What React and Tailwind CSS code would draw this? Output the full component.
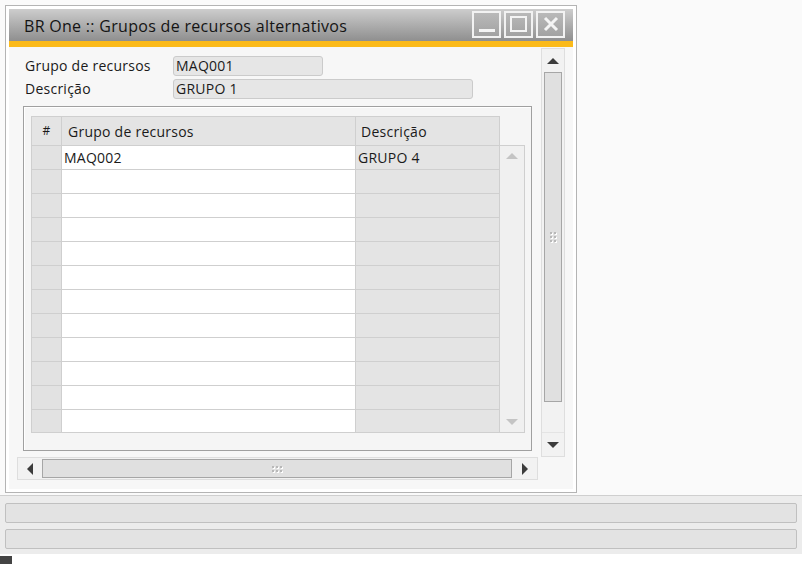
const rows = [
  { code: 'MAQ002', desc: 'GRUPO 4' },
  ...Array.from({ length: 11 }, () => ({ code: '', desc: '' })),
]

const Grip = ({ vertical }) => (
  <div className={vertical ? 'grid grid-cols-2 gap-[2px]' : 'grid grid-cols-3 gap-[2px]'}>
    {Array.from({ length: 6 }).map((_, i) => (
      <span key={i} className="w-[2px] h-[2px] bg-[#b8b8b8] shadow-[1px_1px_0_#ffffff]" />
    ))}
  </div>
)

const Arrow = ({ dir, faint }) => {
  const color = faint ? '#c4c4c4' : '#3c3c3c'
  const pts = {
    up: '0,6 6,0 12,6',
    down: '0,0 6,6 12,0',
    left: '6,0 0,6 6,12',
    right: '0,0 6,6 0,12',
  }[dir]
  const w = dir === 'up' || dir === 'down' ? 12 : 6
  const h = dir === 'up' || dir === 'down' ? 6 : 12
  return (
    <svg width={w} height={h} viewBox={`0 0 ${w} ${h}`}>
      <polygon points={pts} fill={color} />
    </svg>
  )
}

const TitleButton = ({ children }) => (
  <div className="w-[29px] h-[27px] border-2 border-[#f2f2f2] bg-gradient-to-b from-[#b9b9b9] to-[#a2a2a2] flex items-center justify-center">
    {children}
  </div>
)

export default function App() {
  return (
    <div className="w-[802px] h-[564px] bg-[#fafafa] overflow-hidden flex flex-col text-[#1a1a1a]" style={{ fontFamily: '"Open Sans", "Noto Sans", sans-serif' }}>
      <div className="h-[5px]" />
      <div className="ml-[5px] w-[572px] h-[488px] border border-[#b4b4b4] bg-white p-[3px] flex flex-col">
        {/* title */}
        <div className="h-[32px] bg-gradient-to-b from-[#cdcdcd] to-[#8f8f8f] flex items-center pl-[15px] pr-[8px]">
          <span className="text-[16px] tracking-[0.3px] text-[#141414] flex-1 mt-[1px]">BR One :: Grupos de recursos alternativos</span>
          <div className="flex gap-[3px] mt-[-2px]">
            <TitleButton>
              <span className="w-[16px] h-[3px] bg-[#f4f4f4] mt-[12px]" />
            </TitleButton>
            <TitleButton>
              <span className="w-[17px] h-[16px] border-2 border-[#f4f4f4]" />
            </TitleButton>
            <TitleButton>
              <svg width="16" height="16" viewBox="0 0 16 16">
                <path d="M2 2 L14 14 M14 2 L2 14" stroke="#f4f4f4" strokeWidth="3" />
              </svg>
            </TitleButton>
          </div>
        </div>
        <div className="h-[6px] bg-[#fbba1a]" />

        {/* body */}
        <div className="flex-1 bg-[#f7f7f7] flex flex-col">
          <div className="flex flex-1">
            <div className="w-[532px] flex flex-col pl-[14px] pt-[8px]">
              <div className="flex items-center h-[21px] text-[14px] tracking-[0.25px]">
                <span className="w-[150px] pl-[2px]">Grupo de recursos</span>
                <div className="w-[150px] h-[20px] rounded-[3px] border border-[#cbcbcb] bg-[#e6e6e6] pl-[2px] leading-[18px]">MAQ001</div>
              </div>
              <div className="flex items-center h-[21px] text-[14px] tracking-[0.25px] mt-[2px]">
                <span className="w-[150px] pl-[2px]">Descrição</span>
                <div className="w-[300px] h-[20px] rounded-[3px] border border-[#cbcbcb] bg-[#e6e6e6] pl-[2px] leading-[18px]">GRUPO 1</div>
              </div>

              {/* grid frame */}
              <div className="mt-[7px] w-[509px] h-[345px] border border-[#a0a0a0] shadow-[inset_1px_1px_0_#ffffff] bg-[#f5f5f5] pl-[7px] pt-[9px]">
                <div className="flex text-[14px] tracking-[0.25px]">
                  <div className="w-[469px]">
                    <div className="flex h-[29px] bg-[#e4e4e4] border-t border-l border-[#cfcfcf]">
                      <div className="w-[30px] border-r border-[#cfcfcf] flex items-center justify-center text-[12px]">#</div>
                      <div className="w-[294px] border-r border-[#cfcfcf] flex items-center pl-[6px]">Grupo de recursos</div>
                      <div className="flex-1 border-r border-[#cfcfcf] flex items-center pl-[5px]">Descrição</div>
                    </div>
                    {rows.map((r, i) => (
                      <div key={i} className="flex h-[24px] border-t border-l border-[#cfcfcf] last:border-b">
                        <div className="w-[30px] border-r border-[#cfcfcf] bg-[#e2e2e2]" />
                        <div className="w-[294px] border-r border-[#cfcfcf] bg-white flex items-center pl-[2px]">{r.code}</div>
                        <div className="flex-1 border-r border-[#cfcfcf] bg-[#e4e4e4] flex items-center pl-[2px]">{r.desc}</div>
                      </div>
                    ))}
                  </div>
                  <div className="mt-[29px] w-[25px] h-[288px] border-t border-r border-b border-[#cfcfcf] bg-[#f0f0f0] flex flex-col items-center justify-between py-[7px]">
                    <Arrow dir="up" faint />
                    <Arrow dir="down" faint />
                  </div>
                </div>
              </div>
            </div>

            {/* window vertical scrollbar */}
            <div className="w-[24px] mt-[1px] h-[409px] border border-[#dedede] bg-[#f2f2f2] flex flex-col">
              <div className="h-[23px] flex items-center justify-center"><Arrow dir="up" /></div>
              <div className="mx-[2px] h-[330px] border border-[#a6a6a6] bg-[#e0e0e0] flex items-center justify-center">
                <Grip vertical />
              </div>
              <div className="flex-1" />
              <div className="h-[24px] flex items-center justify-center border-t border-[#e4e4e4]"><Arrow dir="down" /></div>
            </div>
          </div>

          {/* horizontal scrollbar */}
          <div className="h-[23px] ml-[8px] w-[521px] mb-[9px] border border-[#dedede] bg-[#f2f2f2] flex">
            <div className="w-[24px] flex items-center justify-center"><Arrow dir="left" /></div>
            <div className="flex-1 my-[1px] border border-[#a6a6a6] bg-[#e0e0e0] flex items-center justify-center">
              <Grip />
            </div>
            <div className="w-[25px] flex items-center justify-center"><Arrow dir="right" /></div>
          </div>
        </div>
      </div>

      {/* status area */}
      <div className="mt-[2px] h-[59px] border-t border-[#cfcfcf] bg-[#ececec] px-[5px] pt-[7px] flex flex-col gap-[6px]">
        <div className="h-[20px] rounded-[2px] border border-[#c0c0c0] bg-[#e3e3e3]" />
        <div className="h-[20px] rounded-[2px] border border-[#c0c0c0] bg-[#e3e3e3]" />
      </div>
      <div className="flex-1 bg-white relative">
        <div className="absolute left-0 bottom-0 w-[12px] h-[8px] bg-[#444444]" />
      </div>
    </div>
  )
}
